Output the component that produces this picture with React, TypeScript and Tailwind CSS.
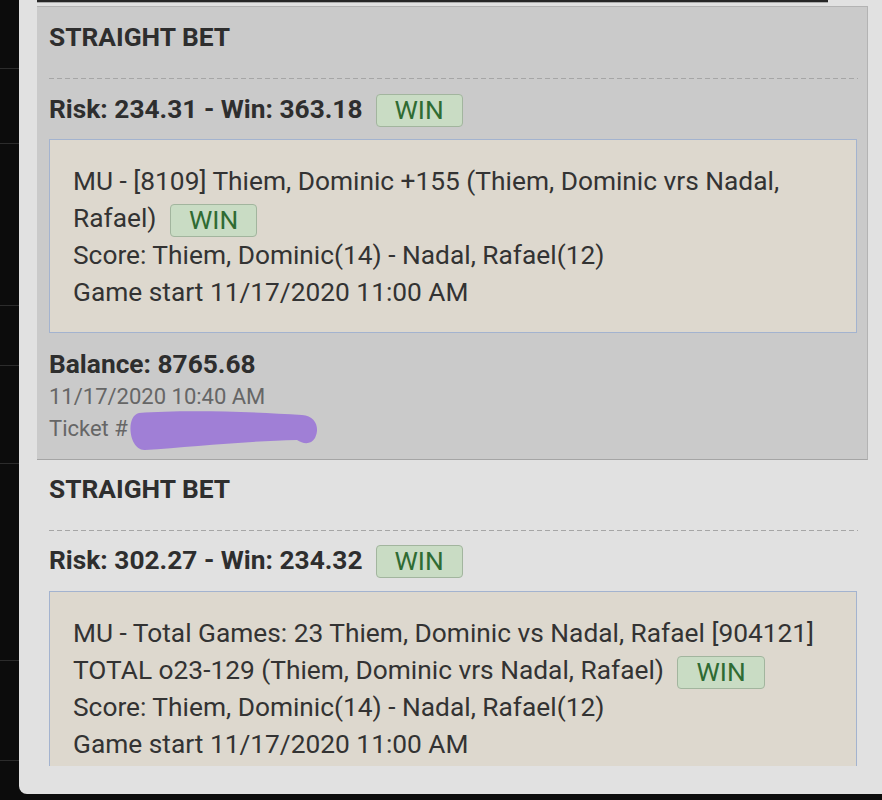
const stripLines = [68, 143, 305, 365, 463, 660, 760];

function LeftStrip() {
  return (
    <div className="relative h-[800px] w-[19px] shrink-0 bg-[#0c0c0c]">
      {stripLines.map((y) => (
        <div key={y} className="absolute left-0 h-px w-[19px] bg-[#2c2c2c]" style={{ top: y }} />
      ))}
    </div>
  );
}

function WinBadge() {
  return (
    <span className="ml-[7px] inline-flex h-[33px] items-center rounded-[4px] border border-[#a2b59e] bg-[#c9dcc4] px-[18px] align-middle text-[26.3px] font-normal leading-none text-[#2f6b33]">
      WIN
    </span>
  );
}

function Scribble() {
  return (
    <svg
      className="absolute left-[78px] top-[-3px]"
      width="192"
      height="42"
      viewBox="0 0 192 42"
    >
      <path
        d="M12 3 C 50 0, 120 1, 175 5 C 189 6, 193 18, 188 28 C 184 35, 176 34, 170 30 C 120 31, 62 37, 18 40 C 2 41, -2 6, 12 3 Z"
        fill="#a07fd6"
      />
    </svg>
  );
}

function Dashed() {
  return (
    <div className="h-px w-[809px] bg-[repeating-linear-gradient(90deg,#a6a6a6_0_5px,transparent_5px_8px)]" />
  );
}

export default function App() {
  return (
    <div className="flex h-[800px] w-[882px] overflow-hidden bg-[#0c0c0c] font-['Roboto',sans-serif] text-[#2e2e2e]">
      <LeftStrip />
      <div className="flex h-[794px] w-[880px] shrink-0 flex-col rounded-bl-lg bg-[#e1e1e1] pl-[18px]">
        <div className="h-[2px] w-[791px] bg-[#262626]" />
        <div className="h-px w-[791px] bg-[#a9a9a9]" />

        <div className="mt-[3px] h-[760px] w-[831px] overflow-hidden">
          {/* first bet */}
          <div className="border-t border-b border-r border-[#b3b3b3] border-b-[#a5a5a5] bg-[#cacaca] pl-3 pr-[10px] pt-[14px] pb-[14px]">
            <div className="text-[26.3px] font-bold leading-[32px]">STRAIGHT BET</div>
            <div className="mt-[25px]">
              <Dashed />
            </div>
            <div className="mt-[13px] flex h-[36px] items-center text-[26.3px] font-bold">
              Risk: 234.31 - Win: 363.18
              <span className="ml-[13px] inline-flex h-[33px] items-center rounded-[4px] border border-[#a2b59e] bg-[#c9dcc4] px-[18px] text-[26.3px] font-normal leading-none text-[#2f6b33]">
                WIN
              </span>
            </div>
            <div className="mt-[11px] w-[808px] border border-[#a3b3cf] bg-[#ddd8ce] px-[23px] pt-[23px] pb-[21px] text-[26.3px] leading-[37px] text-[#333]">
              <div>
                MU - [8109] Thiem, Dominic +155 (Thiem, Dominic vrs Nadal, Rafael) <WinBadge />
              </div>
              <div>Score: Thiem, Dominic(14) - Nadal, Rafael(12)</div>
              <div>Game start 11/17/2020 11:00 AM</div>
            </div>
            <div className="mt-[15px] text-[26.3px] font-bold leading-[32px]">Balance: 8765.68</div>
            <div className="mt-px text-[22px] leading-[32px] text-[#666]">11/17/2020 10:40 AM</div>
            <div className="relative text-[22px] leading-[32px] text-[#666]">
              Ticket #
              <Scribble />
            </div>
          </div>

          {/* second bet */}
          <div className="pl-3 pr-[10px] pt-[13px]">
            <div className="text-[26.3px] font-bold leading-[32px]">STRAIGHT BET</div>
            <div className="mt-[25px]">
              <Dashed />
            </div>
            <div className="mt-[12px] flex h-[36px] items-center text-[26.3px] font-bold">
              Risk: 302.27 - Win: 234.32
              <span className="ml-[13px] inline-flex h-[33px] items-center rounded-[4px] border border-[#a2b59e] bg-[#c9dcc4] px-[18px] text-[26.3px] font-normal leading-none text-[#2f6b33]">
                WIN
              </span>
            </div>
            <div className="mt-[12px] w-[808px] border border-[#a3b3cf] bg-[#ddd8ce] px-[23px] pt-[23px] pb-[21px] text-[26.3px] leading-[37px] text-[#333]">
              <div>MU - Total Games: 23 Thiem, Dominic vs Nadal, Rafael [904121]</div>
              <div>
                TOTAL o23-129 (Thiem, Dominic vrs Nadal, Rafael) <WinBadge />
              </div>
              <div>Score: Thiem, Dominic(14) - Nadal, Rafael(12)</div>
              <div>Game start 11/17/2020 11:00 AM</div>
            </div>
          </div>
        </div>
      </div>
    </div>
  );
}
